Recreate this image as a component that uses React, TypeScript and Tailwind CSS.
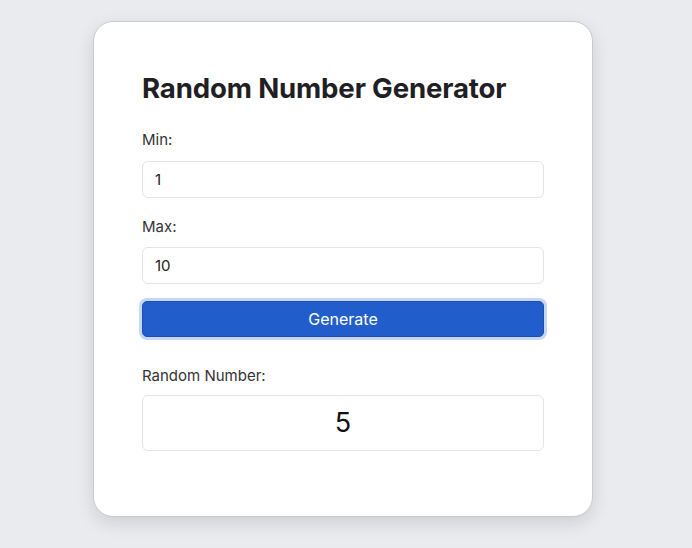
import React, { useState } from 'react';

export default function App() {
  const [min, setMin] = useState('1');
  const [max, setMax] = useState('10');
  const [result, setResult] = useState<number | null>(5);

  const generate = () => {
    const lo = parseInt(min, 10);
    const hi = parseInt(max, 10);
    if (isNaN(lo) || isNaN(hi) || lo > hi) return;
    setResult(Math.floor(Math.random() * (hi - lo + 1)) + lo);
  };

  return (
    <div className="min-h-screen bg-[#eaebef] pt-[21px] pl-[93px]" style={{ fontFamily: 'Inter, "Noto Sans", sans-serif' }}>
      <div className="w-[500px] h-[496px] bg-white border border-[#c9c9ce] rounded-[20px] shadow-[0_6px_18px_rgba(0,0,0,0.12)] px-[48px] pt-[49px]">
        <h1 className="text-[27.6px] leading-[34px] font-bold text-[#1f2023] tracking-[-0.15px]">Random Number Generator</h1>

        <label className="block mt-[26px] text-[15px] leading-[18px] text-[#333]">Min:</label>
        <input
          type="number"
          value={min}
          onChange={e => setMin(e.target.value)}
          className="mt-[12px] block w-full h-[37px] px-[12px] text-[15px] text-[#222] border border-[#e3e3e8] rounded-[6px] outline-none"
        />

        <label className="block mt-[20px] text-[15px] leading-[18px] text-[#333]">Max:</label>
        <input
          type="number"
          value={max}
          onChange={e => setMax(e.target.value)}
          className="mt-[11px] block w-full h-[37px] px-[12px] text-[15px] text-[#222] border border-[#e3e3e8] rounded-[6px] outline-none"
        />

        <button
          onClick={generate}
          className="mt-[17px] block w-full h-[36px] bg-[#225ecb] text-white text-[16px] rounded-[5px] ring-[3px] ring-[#c6d6f6] border border-[#1c4fae]"
        >
          Generate
        </button>

        <p className="mt-[30px] text-[15px] leading-[18px] text-[#333]">Random Number:</p>
        <div className="mt-[10px] h-[56px] border border-[#e3e3e8] rounded-[6px] flex items-center justify-center text-[27px] text-[#111]">
          {result}
        </div>
      </div>
    </div>
  );
}
